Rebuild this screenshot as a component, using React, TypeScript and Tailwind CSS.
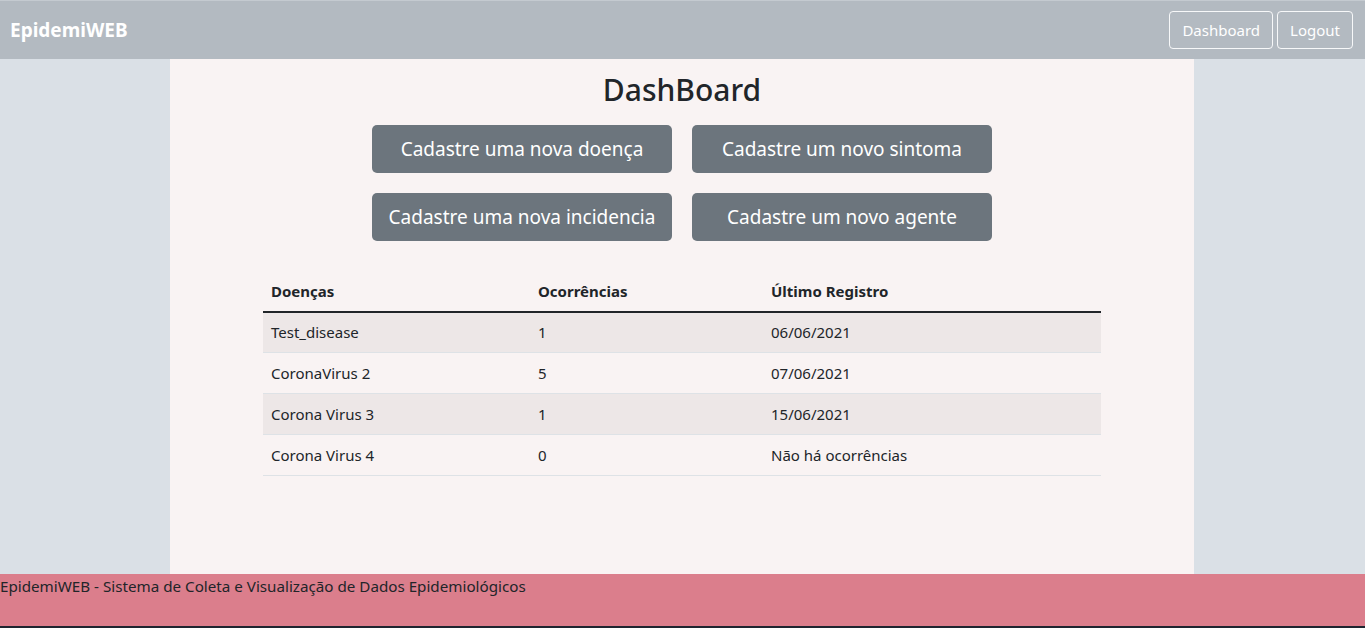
const rows = [
  { name: "Test_disease", count: "1", last: "06/06/2021" },
  { name: "CoronaVirus 2", count: "5", last: "07/06/2021" },
  { name: "Corona Virus 3", count: "1", last: "15/06/2021" },
  { name: "Corona Virus 4", count: "0", last: "Não há ocorrências" },
];

const actions = [
  "Cadastre uma nova doença",
  "Cadastre um novo sintoma",
  "Cadastre uma nova incidencia",
  "Cadastre um novo agente",
];

export default function App() {
  return (
    <div
      className="flex h-[628px] flex-col bg-[#dae0e6] text-[#212529]"
      style={{ fontFamily: '"Noto Sans", "Open Sans", sans-serif' }}
    >
      <nav className="flex h-[59px] items-center justify-between border-t border-[#c4cad0] bg-[#b3bac1] pl-[10px] pr-[12px]">
        <span className="text-[19px] font-bold text-white">EpidemiWEB</span>
        <div className="flex gap-1">
          <button className="h-[38px] rounded border border-white/90 px-3 text-[15px] text-white">
            Dashboard
          </button>
          <button className="h-[38px] rounded border border-white/90 px-3 text-[15px] text-white">
            Logout
          </button>
        </div>
      </nav>

      <main className="ml-[170px] flex w-[1024px] flex-1 flex-col items-center bg-[#f9f3f3]">
        <h1 className="mt-[11px] text-[30px] leading-[40px] font-medium">DashBoard</h1>
        <div className="mt-[15px] grid grid-cols-[300px_300px] gap-5">
          {actions.map((a) => (
            <button
              key={a}
              className="h-12 rounded-[5px] bg-[#6c757d] text-[19px] text-white"
            >
              {a}
            </button>
          ))}
        </div>

        <table className="mt-[30px] w-[838px] border-collapse text-left text-[15px]">
          <thead>
            <tr className="border-b-2 border-[#212529]">
              <th className="w-[267px] px-2 pt-[9px] pb-[8px] font-bold">Doenças</th>
              <th className="w-[233px] px-2 pt-[9px] pb-[8px] font-bold">Ocorrências</th>
              <th className="px-2 pt-[9px] pb-[8px] font-bold">Último Registro</th>
            </tr>
          </thead>
          <tbody>
            {rows.map((r, i) => (
              <tr
                key={r.name}
                className={`h-[41px] border-b border-[#dee2e6] ${i % 2 === 0 ? "bg-[#ede7e7]" : ""}`}
              >
                <td className="px-2">{r.name}</td>
                <td className="px-2">{r.count}</td>
                <td className="px-2">{r.last}</td>
              </tr>
            ))}
          </tbody>
        </table>
      </main>

      <footer className="h-[52px] bg-[#db7e8c] text-[15.2px] leading-[24px]">
        EpidemiWEB - Sistema de Coleta e Visualização de Dados Epidemiológicos
      </footer>
      <div className="h-[2px] bg-[#1f2530]" />
    </div>
  );
}
